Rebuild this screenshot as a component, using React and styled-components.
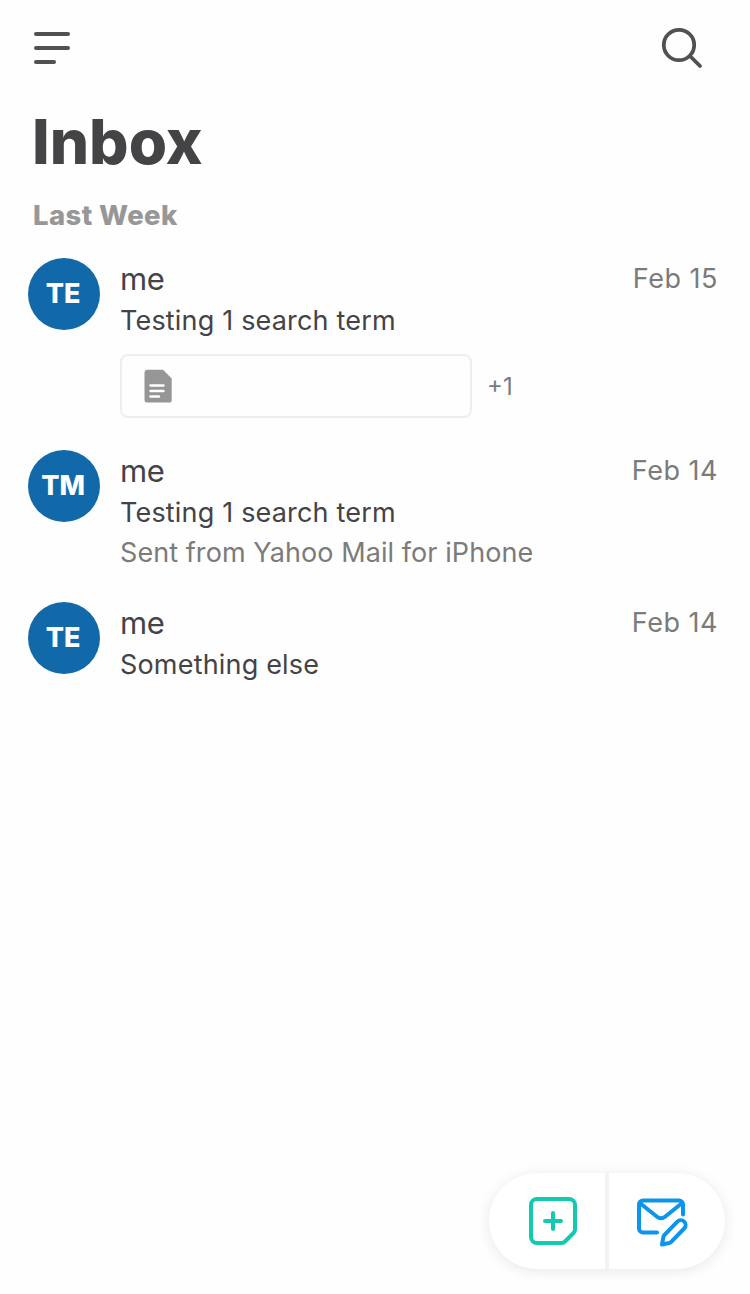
import React from "react";
import styled, { createGlobalStyle } from "styled-components";

const GlobalStyle = createGlobalStyle`
  * { box-sizing: border-box; }
  body { margin: 0; background: #fefefe; }
`;

const Screen = styled.div`
  width: 750px;
  height: 1294px;
  position: relative;
  overflow: hidden;
  background: #fefefe;
  color: #444346;
  font-family: Inter, "Liberation Sans", sans-serif;
`;

const TopBar = styled.header`
  display: flex;
  justify-content: space-between;
  padding: 24px 44px 0 28px;
  height: 104px;
`;

const IconButton = styled.button`
  width: 48px;
  height: 48px;
  padding: 0;
  border: 0;
  background: none;
  color: #515053;

  svg { display: block; }
`;

const Title = styled.h1`
  margin: 0;
  padding-left: 32px;
  height: 76px;
  font-size: 62px;
  line-height: 76px;
  font-weight: 850;
  letter-spacing: 0;
`;

const SectionLabel = styled.h2`
  margin: 0;
  padding: 18px 0 0 33px;
  height: 78px;
  font-size: 27.5px;
  line-height: 35px;
  font-weight: 800;
  letter-spacing: 0.4px;
  color: #979797;
`;

const MessageList = styled.main`
  display: flex;
  flex-direction: column;
`;

const Message = styled.article`
  display: flex;
  padding: 0 32px 0 28px;
  margin-bottom: 32px;
`;

const Avatar = styled.div`
  width: 72px;
  height: 72px;
  flex: none;
  border-radius: 50%;
  background: #1269a9;
  color: #fff;
  display: flex;
  align-items: center;
  justify-content: center;
  padding: 0 2px 1px 0;
  font-size: 27px;
  font-weight: 800;
`;

const Body = styled.div`
  flex: 1;
  padding-left: 20px;
`;

const Line = styled.div`
  display: flex;
  justify-content: space-between;
  height: 42px;
  line-height: 42px;
`;

const Sender = styled.span`
  font-size: 31px;
  letter-spacing: -0.5px;
`;

const MessageDate = styled.time`
  font-size: 27px;
  color: #7b7b7b;
  letter-spacing: 0.5px;
`;

const Subject = styled.div`
  height: 38px;
  line-height: 41px;
  font-size: 27px;
  letter-spacing: 0.18px;
`;

const Snippet = styled.div`
  height: 40px;
  line-height: 45px;
  font-size: 27px;
  letter-spacing: 0.07px;
  color: #7b7b7b;
`;

const Attachments = styled.div`
  display: flex;
  align-items: center;
  gap: 15px;
  margin-top: 16px;
`;

const AttachmentCard = styled.div`
  width: 352px;
  height: 64px;
  display: flex;
  align-items: center;
  padding-left: 22px;
  border: 2px solid #eeeeee;
  border-radius: 8px;
`;

const MoreCount = styled.span`
  font-size: 24px;
  color: #7b7b7b;
`;

const ActionPill = styled.nav`
  position: absolute;
  left: 489px;
  top: 1173px;
  width: 236px;
  height: 96px;
  display: flex;
  border-radius: 48px;
  background: #fff;
  box-shadow: 0 2px 14px rgba(0, 0, 0, 0.09);
`;

const ActionButton = styled.button`
  flex: 1 1 0;
  min-width: 0;
  display: flex;
  align-items: center;
  justify-content: ${(p) => p.$align};
  padding: 0 28px;
  border: 0;
  background: none;
  color: ${(p) => p.$color};

  svg { flex: none; }
`;

const Divider = styled.div`
  width: 4px;
  flex: none;
  background: #f3f3f3;
`;

const MenuIcon = () => (
  <svg width="48" height="48" viewBox="0 0 48 48" fill="none" stroke="currentColor" strokeWidth="4" strokeLinecap="round">
    <path d="M8 10h32M8 24h32M8 38h18" />
  </svg>
);

const SearchIcon = () => (
  <svg width="48" height="48" viewBox="0 0 48 48" fill="none" stroke="currentColor" strokeWidth="3.8" strokeLinecap="round">
    <circle cx="21" cy="21" r="15.2" />
    <path d="M32 32l10 10" />
  </svg>
);

const DocumentIcon = () => (
  <svg width="28" height="34" viewBox="0 0 28 34">
    <path d="M3 .8h16L27.7 9.5V31a2.6 2.6 0 0 1-2.6 2.6H3A2.6 2.6 0 0 1 .5 31V3.4A2.6 2.6 0 0 1 3 .8z" fill="#969696" />
    <path d="M6.5 16.5h13M6.5 22h13M6.5 27.500h8.5" stroke="#fff" strokeWidth="2.4" strokeLinecap="round" />
  </svg>
);

const AddNoteIcon = () => (
  <svg width="48" height="48" viewBox="0 0 48 48" fill="none" stroke="currentColor" strokeWidth="4" strokeLinecap="round" strokeLinejoin="round">
    <path d="M8 2h32a6 6 0 0 1 6 6v24.5a5 5 0 0 1-1.5 3.5L36 44.5a5 5 0 0 1-3.5 1.5H8a6 6 0 0 1-6-6V8a6 6 0 0 1 6-6z" />
    <path d="M24 16v16M16 24h16" />
  </svg>
);

const ComposeIcon = () => (
  <svg width="52" height="50" viewBox="0 -2 52 50" overflow="visible" fill="none" stroke="currentColor" strokeWidth="4" strokeLinecap="round" strokeLinejoin="round">
    <path d="M20 34H6a4 4 0 0 1-4-4V6a4 4 0 0 1 4-4h36a4 4 0 0 1 4 4v10" transform="translate(0 .6)" />
    <path d="M3.5 5.500L20 18.700a6.300 6.300 0 0 0 8 0L44.500 5.500" />
    <path d="M25 46.500l1.500-7.800a4 4 0 0 1 1-1.900L40.400 23.700a4.800 4.800 0 0 1 6.800 6.800L34.200 43.900a4 4 0 0 1-1.900 1.100z" />
  </svg>
);

const messages = [
  { id: 1, initials: "TE", subject: "Testing 1 search term", date: "Feb 15", more: "+1" },
  { id: 2, initials: "TM", subject: "Testing 1 search term", date: "Feb 14", snippet: "Sent from Yahoo Mail for iPhone" },
  { id: 3, initials: "TE", subject: "Something else", date: "Feb 14" },
];

export default function App() {
  return (
    <Screen>
      <GlobalStyle />
      <TopBar>
        <IconButton aria-label="Menu"><MenuIcon /></IconButton>
        <IconButton aria-label="Search"><SearchIcon /></IconButton>
      </TopBar>
      <Title>Inbox</Title>
      <SectionLabel>Last Week</SectionLabel>
      <MessageList>
        {messages.map((m) => (
          <Message key={m.id}>
            <Avatar>{m.initials}</Avatar>
            <Body>
              <Line>
                <Sender>me</Sender>
                <MessageDate>{m.date}</MessageDate>
              </Line>
              <Subject>{m.subject}</Subject>
              {m.snippet && <Snippet>{m.snippet}</Snippet>}
              {m.more && (
                <Attachments>
                  <AttachmentCard><DocumentIcon /></AttachmentCard>
                  <MoreCount>{m.more}</MoreCount>
                </Attachments>
              )}
            </Body>
          </Message>
        ))}
      </MessageList>
      <ActionPill>
        <ActionButton $color="#12cbae" $align="flex-end" aria-label="New note"><AddNoteIcon /></ActionButton>
        <Divider />
        <ActionButton $color="#0b95ec" $align="flex-start" aria-label="Compose"><ComposeIcon /></ActionButton>
      </ActionPill>
    </Screen>
  );
}
